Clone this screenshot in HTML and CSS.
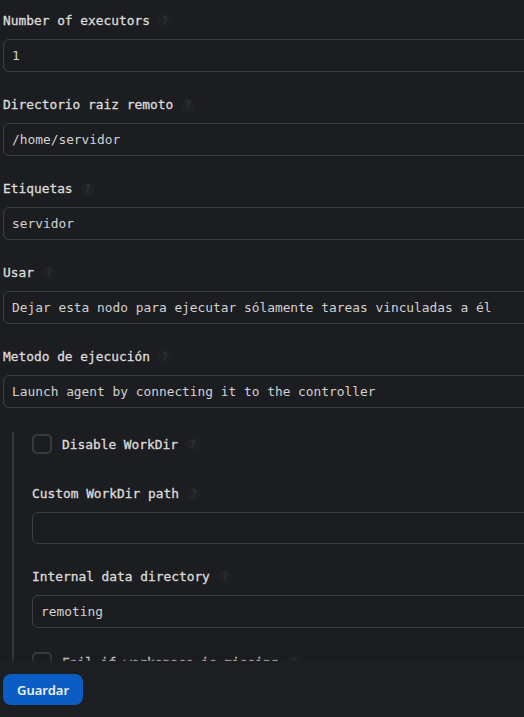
FILE: index.html
```html
<!DOCTYPE html>
<html lang="es">
<head>
<meta charset="utf-8">
<title>Nodo</title>
<link rel="stylesheet" href="styles.css">
</head>
<body>
<div class="viewport">
<form class="form">
  <div class="field">
    <div class="label">Number of executors <span class="help">?</span></div>
    <div class="input">1</div>
  </div>
  <div class="field">
    <div class="label">Directorio raiz remoto <span class="help">?</span></div>
    <div class="input">/home/servidor</div>
  </div>
  <div class="field">
    <div class="label">Etiquetas <span class="help">?</span></div>
    <div class="input">servidor</div>
  </div>
  <div class="field">
    <div class="label">Usar <span class="help">?</span></div>
    <div class="input">Dejar esta nodo para ejecutar sólamente tareas vinculadas a él</div>
  </div>
  <div class="field">
    <div class="label">Metodo de ejecución <span class="help">?</span></div>
    <div class="input">Launch agent by connecting it to the controller</div>
  </div>
  <div class="nested">
    <div class="check-row">
      <span class="checkbox"></span>
      <span class="check-label">Disable WorkDir <span class="help">?</span></span>
    </div>
    <div class="field first">
      <div class="label">Custom WorkDir path <span class="help">?</span></div>
      <div class="input"></div>
    </div>
    <div class="field">
      <div class="label">Internal data directory <span class="help">?</span></div>
      <div class="input">remoting</div>
    </div>
    <div class="check-row">
      <span class="checkbox"></span>
      <span class="check-label">Fail if workspace is missing <span class="help">?</span></span>
    </div>
  </div>
</form>
</div>
<div class="bottom-bar">
  <button class="btn-save" type="button">Guardar</button>
</div>
</body>
</html>
```
FILE: styles.css
```css
html, body {
  margin: 0;
  padding: 0;
  overflow: hidden;
  background: #1c1d20;
}

body {
  font-family: "DejaVu Sans Mono", "Liberation Mono", monospace;
  font-size: 12.85px;
  color: #d6d6d6;
  height: 717px;
}

.viewport {
  width: 524px;
  height: 717px;
  overflow: hidden;
}

.form {
  width: 600px;
  padding: 12px 0 0 3px;
  display: flex;
  flex-direction: column;
}

.field {
  display: flex;
  flex-direction: column;
  gap: 9px;
  margin-bottom: 24px;
}

.label {
  height: 18px;
  line-height: 18px;
  color: #dcdcdc;
  -webkit-text-stroke: 0.3px #dcdcdc;
  white-space: nowrap;
  display: flex;
  align-items: center;
}

.help {
  display: inline-flex;
  align-items: center;
  justify-content: center;
  width: 14px;
  height: 14px;
  margin-left: 8px;
  border-radius: 50%;
  background: #1f2124;
  color: #2c3139;
  -webkit-text-stroke: 0;
  font-family: "DejaVu Sans", sans-serif;
  font-size: 10px;
  font-weight: bold;
}

.input {
  box-sizing: border-box;
  height: 33px;
  line-height: 31px;
  border: 1px solid #3e3f43;
  border-radius: 6px;
  padding: 0 8px;
  color: #d2d2d2;
  white-space: nowrap;
}

.input:empty {
  height: 32px;
}

.nested {
  margin-left: 9px;
  border-left: 2px solid #36373b;
  padding: 2px 0 0 18px;
  display: flex;
  flex-direction: column;
}

.check-row {
  display: flex;
  align-items: center;
  gap: 10px;
  height: 20px;
}

.field.first {
  margin-top: 31px;
}

.checkbox {
  box-sizing: border-box;
  width: 20px;
  height: 20px;
  border: 2px solid #363a40;
  border-radius: 5px;
}

.check-label {
  color: #dcdcdc;
  -webkit-text-stroke: 0.3px #dcdcdc;
  display: flex;
  align-items: center;
  white-space: nowrap;
}

.bottom-bar {
  position: fixed;
  left: 0;
  right: 0;
  bottom: 0;
  height: 56px;
  background: #1d1e21;
  box-shadow: 0 -2px 4px rgba(28, 29, 32, 0.4);
  display: flex;
  align-items: center;
  padding-left: 3px;
}

.btn-save {
  width: 80px;
  height: 31px;
  border: none;
  border-radius: 8px;
  background: #0b5cc3;
  color: #eef3fb;
  font-family: "Noto Sans", "Open Sans", sans-serif;
  font-weight: 600;
  font-size: 13px;
  padding: 0;
  margin-top: 1px;
}
```
